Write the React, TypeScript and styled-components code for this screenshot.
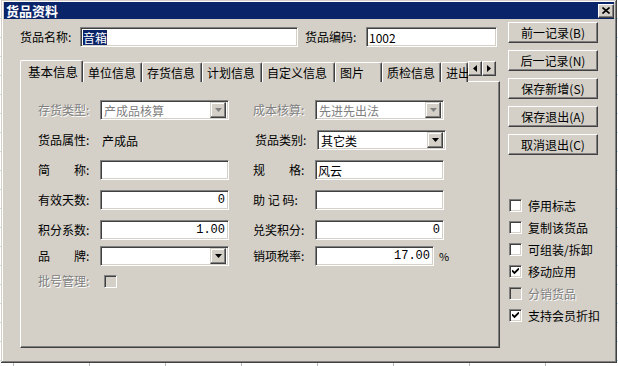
import React from 'react';
import styled, { createGlobalStyle, css } from 'styled-components';

const GlobalStyle = createGlobalStyle`
  html, body {
    margin: 0;
    padding: 0;
  }
  body {
    width: 618px;
    height: 366px;
    overflow: hidden;
    background-color: #fff;
    background-image:
      repeating-linear-gradient(90deg, transparent 0, transparent 13px, #b8b8b8 13px, #b8b8b8 14px, transparent 14px, transparent 76px),
      repeating-linear-gradient(180deg, transparent 0, transparent 18px, #c6dbe6 18px, #c6dbe6 19px);
    font-family: "Noto Sans CJK SC", "DejaVu Sans", sans-serif;
    font-size: 12px;
    color: #000;
  }
`;

const FACE = '#d4d0c8';
const SHADOW = '#808080';
const DARK = '#404040';

const raised = css`
  box-sizing: border-box;
  background: ${FACE};
  border: 1px solid;
  border-color: #fff ${DARK} ${DARK} #fff;
  box-shadow: inset -1px -1px ${SHADOW};
`;

const sunken = css`
  box-sizing: border-box;
  border: 1px solid;
  border-color: ${SHADOW} #fff #fff ${SHADOW};
  box-shadow: inset 1px 1px ${DARK}, inset -1px -1px ${FACE};
`;

const Window = styled.div`
  box-sizing: border-box;
  margin-left: 1px;
  width: 616px;
  height: 363px;
  padding: 2px 3px 3px 3px;
  background: ${FACE};
  box-shadow: inset -1px -1px ${DARK}, inset 1px 1px ${FACE}, inset -2px -2px ${SHADOW}, inset 2px 2px #fff;
  display: flex;
  flex-direction: column;
`;

const TitleBar = styled.div`
  height: 17px;
  background: #0a246a;
  color: #fff;
  display: flex;
  align-items: center;
  justify-content: space-between;
  padding: 0 0 0 2px;
  font-weight: bold;
  font-size: 13px;
  line-height: 17px;
`;

const CloseButton = styled.div`
  ${raised};
  width: 16px;
  height: 14px;
  display: flex;
  align-items: center;
  justify-content: center;
`;

const Body = styled.div`
  flex: 1;
  display: flex;
  gap: 8px;
  padding: 2px 0 0 16px;
`;

const Main = styled.div`
  width: 480px;
  display: flex;
  flex-direction: column;
  padding-top: 6px;
`;

const TopRow = styled.div`
  height: 20px;
  display: flex;
  align-items: center;
`;

const Label = styled.span<{ $w: number; $disabled?: boolean; $indent?: number }>`
  box-sizing: border-box;
  width: ${p => p.$w}px;
  padding-left: ${p => p.$indent || 0}px;
  flex: none;
  white-space: pre;
  line-height: 20px;
  color: ${p => (p.$disabled ? SHADOW : '#000')};
  text-shadow: ${p => (p.$disabled ? '1px 1px 0 #fff' : 'none')};
`;

const TextBox = styled.div<{ $w: number; $right?: boolean; $mono?: boolean }>`
  ${sunken};
  width: ${p => p.$w}px;
  height: 20px;
  flex: none;
  background: #fff;
  display: flex;
  align-items: center;
  justify-content: ${p => (p.$right ? 'flex-end' : 'flex-start')};
  padding: ${p => (p.$right ? '0 3px 0 0' : '0 0 0 2px')};
  font-family: ${p => (p.$mono ? '"Liberation Mono", monospace' : 'inherit')};
  white-space: nowrap;
  overflow: hidden;
`;

const Selected = styled.span`
  background: #0a246a;
  color: #fff;
  line-height: 15px;
`;

const Plain = styled.span`
  padding-left: 2px;
  width: 129px;
  flex: none;
`;

const Combo = styled.div<{ $disabled?: boolean }>`
  ${sunken};
  width: 129px;
  height: 20px;
  flex: none;
  background: #fff;
  display: flex;
  align-items: center;
  justify-content: space-between;
  padding: 2px 2px 2px 3px;
  color: ${p => (p.$disabled ? SHADOW : '#000')};
`;

const DropButton = styled.div`
  ${raised};
  border-color: ${FACE} ${DARK} ${DARK} ${FACE};
  box-shadow: inset -1px -1px ${SHADOW}, inset 1px 1px #fff;
  width: 16px;
  height: 16px;
  display: flex;
  align-items: center;
  justify-content: center;
`;

const TabStrip = styled.div`
  margin-top: 12px;
  height: 22px;
  display: flex;
  align-items: flex-end;
  position: relative;
  z-index: 1;
`;

const TabList = styled.div`
  width: 448px;
  height: 23px;
  display: flex;
  align-items: flex-end;
  overflow: hidden;
  align-self: flex-start;
`;

const Tab = styled.div<{ $w: number; $active?: boolean }>`
  box-sizing: border-box;
  flex: none;
  width: ${p => p.$w}px;
  height: ${p => (p.$active ? 23 : 20)}px;
  margin-bottom: ${p => (p.$active ? -1 : 0)}px;
  padding-left: ${p => (p.$active ? 7 : 4)}px;
  padding-bottom: ${p => (p.$active ? 2 : 0)}px;
  background: ${FACE};
  border-top: 1px solid #fff;
  border-left: 1px solid #fff;
  border-right: 1px solid ${DARK};
  border-radius: 2px 2px 0 0;
  box-shadow: inset -1px 0 ${SHADOW};
  display: flex;
  align-items: center;
  white-space: nowrap;
  font-size: ${p => (p.$active ? 12.5 : 12)}px;
`;

const ArrowButton = styled.div`
  ${raised};
  width: 14px;
  height: 15px;
  margin-bottom: 5px;
  display: flex;
  align-items: center;
  justify-content: center;
  background: ${FACE};
  position: relative;
  z-index: 2;
`;

const Panel = styled.div`
  box-sizing: border-box;
  width: 480px;
  height: 267px;
  border: 1px solid;
  border-color: #fff ${DARK} ${DARK} #fff;
  box-shadow: inset -1px -1px ${SHADOW};
  padding: 18px 0 0 17px;
  display: flex;
  flex-direction: column;
`;

const FieldRow = styled.div<{ $top: number }>`
  height: 20px;
  margin-top: ${p => p.$top}px;
  display: flex;
  align-items: center;
`;

const ColGap = styled.div`
  width: 24px;
  flex: none;
`;

const Percent = styled.span`
  margin-left: 5px;
  font-size: 11px;
`;

const Box = styled.span<{ $disabled?: boolean }>`
  ${sunken};
  width: 13px;
  height: 13px;
  flex: none;
  background: ${p => (p.$disabled ? FACE : '#fff')};
  display: inline-flex;
  align-items: center;
  justify-content: center;
`;

const Side = styled.div`
  width: 90px;
  display: flex;
  flex-direction: column;
  gap: 7px;
  padding-top: 1px;
`;

const Button = styled.div`
  ${raised};
  height: 21px;
  display: flex;
  align-items: center;
  justify-content: center;
  white-space: nowrap;
`;

const CheckList = styled.div`
  margin-top: 32px;
  display: flex;
  flex-direction: column;
`;

const CheckRow = styled.div<{ $disabled?: boolean }>`
  height: 22px;
  display: flex;
  align-items: center;
  gap: 6px;
  padding-left: 1px;
  white-space: nowrap;
  color: ${p => (p.$disabled ? SHADOW : '#000')};
  text-shadow: ${p => (p.$disabled ? '1px 1px 0 #fff' : 'none')};
`;

const Triangle = ({ color = '#000', dir = 'down' }: { color?: string; dir?: 'down' | 'left' | 'right' }) => {
  if (dir === 'down') {
    return (
      <svg width="7" height="4" viewBox="0 0 7 4">
        <path d="M0 0h7L3.5 4z" fill={color} />
      </svg>
    );
  }
  return (
    <svg width="4" height="7" viewBox="0 0 4 7">
      <path d={dir === 'left' ? 'M4 0v7L0 3.5z' : 'M0 0v7L4 3.5z'} fill={color} />
    </svg>
  );
};

const Check = () => (
  <svg width="7" height="7" viewBox="0 0 7 7">
    <path d="M0 2.5l2.5 2.5L7 0.5" stroke="#000" strokeWidth="1.8" fill="none" />
  </svg>
);

const Checkbox = ({ checked, disabled }: { checked?: boolean; disabled?: boolean }) => (
  <Box $disabled={disabled}>{checked && <Check />}</Box>
);

const ComboBox = ({ value, disabled }: { value: string; disabled?: boolean }) => (
  <Combo $disabled={disabled}>
    <span>{value}</span>
    <DropButton>
      <Triangle color={disabled ? SHADOW : '#000'} />
    </DropButton>
  </Combo>
);

// the last tab is only partly visible behind the scroll arrows
const tabs: [string, number][] = [
  ['基本信息', 63],
  ['单位信息', 59],
  ['存货信息', 60],
  ['计划信息', 60],
  ['自定义信息', 73],
  ['图片', 47],
  ['质检信息', 59],
  ['进出', 27],
];

const buttons = ['前一记录(B)', '后一记录(N)', '保存新增(S)', '保存退出(A)', '取消退出(C)'];

const options = [
  { label: '停用标志' },
  { label: '复制该货品' },
  { label: '可组装/拆卸' },
  { label: '移动应用', checked: true },
  { label: '分销货品', disabled: true },
  { label: '支持会员折扣', checked: true },
];

export default function App() {
  return (
    <>
      <GlobalStyle />
      <Window>
        <TitleBar>
          <span>货品资料</span>
          <CloseButton>
            <svg width="8" height="7" viewBox="0 0 8 7">
              <path d="M0.5 0.5l7 6M7.5 0.5l-7 6" stroke="#000" strokeWidth="1.6" />
            </svg>
          </CloseButton>
        </TitleBar>
        <Body>
          <Main>
            <TopRow>
              <Label $w={60}>货品名称:</Label>
              <TextBox $w={218}>
                <Selected>音箱</Selected>
              </TextBox>
              <Label $w={68} $indent={7}>
                货品编码:
              </Label>
              <TextBox $w={131}>1002</TextBox>
            </TopRow>

            <TabStrip>
              <TabList>
                {tabs.map(([name, w], i) => (
                  <Tab key={name} $w={w} $active={i === 0}>
                    {name}
                  </Tab>
                ))}
              </TabList>
              <ArrowButton>
                <Triangle dir="left" />
              </ArrowButton>
              <ArrowButton>
                <Triangle dir="right" />
              </ArrowButton>
            </TabStrip>

            <Panel>
              <FieldRow $top={0}>
                <Label $w={62} $disabled>存货类型:</Label>
                <ComboBox value="产成品核算" disabled />
                <ColGap />
                <Label $w={62} $disabled>成本核算:</Label>
                <ComboBox value="先进先出法" disabled />
              </FieldRow>
              <FieldRow $top={10}>
                <Label $w={62}>货品属性:</Label>
                <Plain>产成品</Plain>
                <ColGap />
                <Label $w={62}>货品类别:</Label>
                <ComboBox value="其它类" />
              </FieldRow>
              <FieldRow $top={10}>
                <Label $w={62}>简　　称:</Label>
                <TextBox $w={129} />
                <ColGap />
                <Label $w={62}>规　　格:</Label>
                <TextBox $w={129}>风云</TextBox>
              </FieldRow>
              <FieldRow $top={10}>
                <Label $w={62}>有效天数:</Label>
                <TextBox $w={129} $right $mono>0</TextBox>
                <ColGap />
                <Label $w={62}>助 记 码:</Label>
                <TextBox $w={129} />
              </FieldRow>
              <FieldRow $top={10}>
                <Label $w={62}>积分系数:</Label>
                <TextBox $w={129} $right $mono>1.00</TextBox>
                <ColGap />
                <Label $w={62}>兑奖积分:</Label>
                <TextBox $w={129} $right $mono>0</TextBox>
              </FieldRow>
              <FieldRow $top={6}>
                <Label $w={62}>品　　牌:</Label>
                <ComboBox value="" />
                <ColGap />
                <Label $w={62}>销项税率:</Label>
                <TextBox $w={119} $right $mono>17.00</TextBox>
                <Percent>%</Percent>
              </FieldRow>
              <FieldRow $top={5}>
                <Label $w={66} $disabled>批号管理:</Label>
                <Checkbox disabled />
              </FieldRow>
            </Panel>
          </Main>

          <Side>
            {buttons.map(b => (
              <Button key={b}>{b}</Button>
            ))}
            <CheckList>
              {options.map(o => (
                <CheckRow key={o.label} $disabled={o.disabled}>
                  <Checkbox checked={o.checked} disabled={o.disabled} />
                  <span>{o.label}</span>
                </CheckRow>
              ))}
            </CheckList>
          </Side>
        </Body>
      </Window>
    </>
  );
}
